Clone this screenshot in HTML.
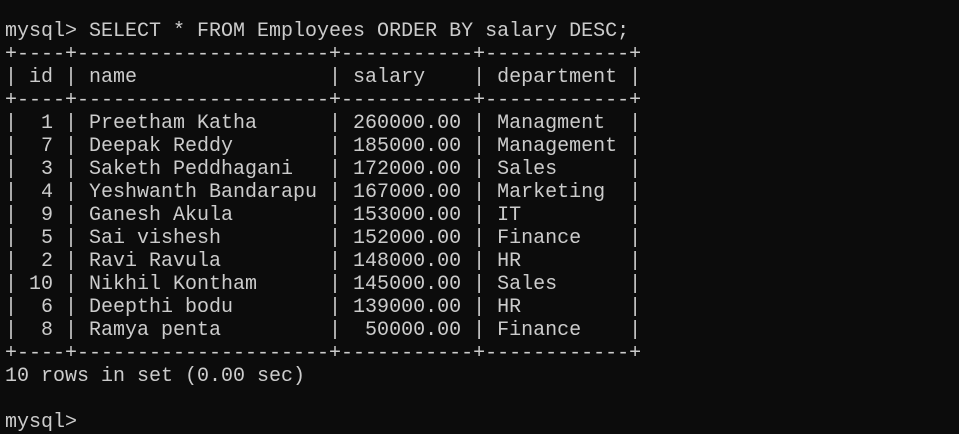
<!DOCTYPE html><html><head><style>
html,body{margin:0;background:#0c0c0c;width:959px;height:432px;overflow:hidden}
pre{margin:0;position:absolute;left:5px;top:20px;font-family:"Liberation Mono",monospace;font-size:20px;line-height:23px;color:#cccccc}
</style></head><body><pre>mysql&gt; SELECT * FROM Employees ORDER BY salary DESC;
+----+---------------------+-----------+------------+
| id | name                | salary    | department |
+----+---------------------+-----------+------------+
|  1 | Preetham Katha      | 260000.00 | Managment  |
|  7 | Deepak Reddy        | 185000.00 | Management |
|  3 | Saketh Peddhagani   | 172000.00 | Sales      |
|  4 | Yeshwanth Bandarapu | 167000.00 | Marketing  |
|  9 | Ganesh Akula        | 153000.00 | IT         |
|  5 | Sai vishesh         | 152000.00 | Finance    |
|  2 | Ravi Ravula         | 148000.00 | HR         |
| 10 | Nikhil Kontham      | 145000.00 | Sales      |
|  6 | Deepthi bodu        | 139000.00 | HR         |
|  8 | Ramya penta         |  50000.00 | Finance    |
+----+---------------------+-----------+------------+
10 rows in set (0.00 sec)

mysql&gt;</pre></body></html>
